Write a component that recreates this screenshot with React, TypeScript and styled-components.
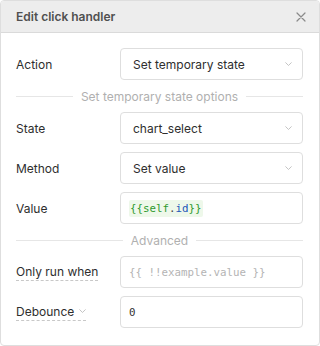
import React from "react";
import styled, { createGlobalStyle } from "styled-components";

const Global = createGlobalStyle`
  html, body { margin: 0; padding: 0; background: #ffffff; }
  body { font-family: Inter, "Noto Sans", sans-serif; -webkit-font-smoothing: antialiased; }
`;

const Panel = styled.div`
  box-sizing: border-box;
  width: 320px;
  height: 346px;
  border: 1px solid #dedede;
  border-radius: 4px;
  overflow: hidden;
  background: #fff;
  display: flex;
  flex-direction: column;
`;

const Header = styled.div`
  height: 31px;
  flex: none;
  background: #ededed;
  border-bottom: 1px solid #dadada;
  display: flex;
  align-items: center;
  justify-content: space-between;
  padding: 0 11px 0 15px;
`;

const Title = styled.div`
  font-size: 12px;
  font-weight: 600;
  color: #505050;
`;

const CloseButton = styled.button`
  border: none;
  background: transparent;
  padding: 0;
  width: 14px;
  height: 14px;
  display: flex;
  align-items: center;
  justify-content: center;
  cursor: pointer;
`;

const Form = styled.div`
  display: grid;
  grid-template-columns: 104px 1fr;
  grid-auto-rows: auto;
  row-gap: 8px;
  padding: 15px 16px 16px 15px;
`;

const Label = styled.div<{ $hint?: boolean }>`
  height: 32px;
  display: flex;
  align-items: center;
  font-size: 12px;
  color: #2e2e2e;
`;

const HintText = styled.span`
  border-bottom: 1px dashed #c8c8c8;
  padding-bottom: 1px;
  line-height: 15px;
  display: inline-flex;
  align-items: center;
  gap: 5px;
`;

const Select = styled.div`
  box-sizing: border-box;
  height: 32px;
  border: 1px solid #dedede;
  border-radius: 4px;
  display: flex;
  align-items: center;
  justify-content: space-between;
  padding: 0 10px 0 12px;
  font-size: 12px;
  color: #2e2e2e;
`;

const CodeInput = styled.div<{ $placeholder?: boolean }>`
  box-sizing: border-box;
  height: 32px;
  border: 1px solid #dedede;
  border-radius: 4px;
  display: flex;
  align-items: center;
  padding: 0 8px;
  font-family: "DejaVu Sans Mono", "Liberation Mono", monospace;
  font-size: 10.8px;
  color: ${(p) => (p.$placeholder ? "#b4b4b4" : "#333")};
`;

const Highlight = styled.span`
  background: #eef8ea;
  padding: 2px 1px;
  border-radius: 2px;
`;

const Tok = styled.span<{ $c: string }>`
  color: ${(p) => p.$c};
`;

const Divider = styled.div`
  grid-column: 1 / -1;
  height: 16px;
  display: flex;
  align-items: center;
  gap: 8px;
  font-size: 12px;
  color: #b0b0b0;
  &::before,
  &::after {
    content: "";
    flex: 1;
    height: 1px;
    background: #e6e6e6;
  }
`;

const Chevron = ({ size = 7 }: { size?: number }) => (
  <svg width={size} height={size * 0.6} viewBox="0 0 10 6" fill="none">
    <path d="M1 1l4 4 4-4" stroke="#b8b8b8" strokeWidth="1.2" strokeLinecap="round" strokeLinejoin="round" />
  </svg>
);

const SelectField = ({ value }: { value: string }) => (
  <Select>
    <span>{value}</span>
    <Chevron />
  </Select>
);

export default function App() {
  return (
    <>
      <Global />
      <Panel>
        <Header>
          <Title>Edit click handler</Title>
          <CloseButton aria-label="Close">
            <svg width="10" height="10" viewBox="0 0 10 10">
              <path d="M1 1l8 8M9 1l-8 8" stroke="#8a8a8a" strokeWidth="1.2" strokeLinecap="round" />
            </svg>
          </CloseButton>
        </Header>
        <Form>
          <Label>Action</Label>
          <SelectField value="Set temporary state" />

          <Divider>Set temporary state options</Divider>

          <Label>State</Label>
          <SelectField value="chart_select" />

          <Label>Method</Label>
          <SelectField value="Set value" />

          <Label>Value</Label>
          <CodeInput>
            <Highlight>
              <Tok $c="#2e9a2e">{"{{self"}</Tok>
              <Tok $c="#444">.</Tok>
              <Tok $c="#2457b8">id</Tok>
              <Tok $c="#2e9a2e">{"}}"}</Tok>
            </Highlight>
          </CodeInput>

          <Divider>Advanced</Divider>

          <Label>
            <HintText>Only run when</HintText>
          </Label>
          <CodeInput $placeholder>{"{{ !!example.value }}"}</CodeInput>

          <Label>
            <HintText>
              Debounce <Chevron size={7} />
            </HintText>
          </Label>
          <CodeInput>0</CodeInput>
        </Form>
      </Panel>
    </>
  );
}
